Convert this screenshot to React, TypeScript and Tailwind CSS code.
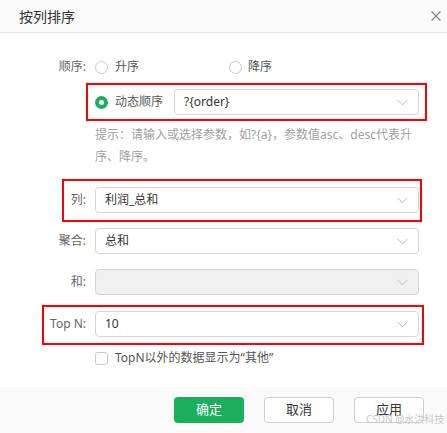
import React from 'react';

const font = { fontFamily: '"Noto Sans", "Noto Sans CJK SC", sans-serif' };

const Chevron = () => (
  <svg width="11" height="7" viewBox="0 0 11 7" fill="none" className="shrink-0">
    <path d="M0.5 0.8L5.5 5.8L10.5 0.8" stroke="#b8b8b8" strokeWidth="1" />
  </svg>
);

function Select({ value, disabled }: { value?: string; disabled?: boolean }) {
  return (
    <div
      className={`flex-1 h-[26px] flex items-center justify-between pl-[9px] pr-[10px] rounded-[4px] border border-[#d6d6d6] ${
        disabled ? 'bg-[#f0f0f0]' : 'bg-white'
      }`}
    >
      <span className="text-[12px] text-[#333]">{value}</span>
      <Chevron />
    </div>
  );
}

function Row({ label, children, className = '' }: { label: string; children: React.ReactNode; className?: string }) {
  return (
    <div className={`flex items-center ${className}`}>
      <div className="w-[86px] shrink-0 text-right text-[12px] text-[#666]">{label}</div>
      <div className="flex-1 flex items-center ml-[9px]">{children}</div>
    </div>
  );
}

const Radio = ({ checked }: { checked?: boolean }) =>
  checked ? (
    <span className="w-[13px] h-[13px] rounded-full border-[4px] border-[#1aaf5d] bg-white shrink-0" />
  ) : (
    <span className="w-[13px] h-[13px] rounded-full border border-[#c8c8c8] bg-white shrink-0" />
  );

export default function App() {
  return (
    <div className="relative w-[447px] h-[433px] bg-white flex flex-col overflow-hidden" style={font}>
      {/* Header */}
      <div className="h-[33px] shrink-0 bg-[#fafafa] border-b border-[#e6e8ec] flex items-center justify-between pl-[19px] pr-[6px]">
        <span className="text-[14px] text-[#333]">按列排序</span>
        <svg width="10" height="10" viewBox="0 0 10 10">
          <path d="M0.5 0.5L9.5 9.5M9.5 0.5L0.5 9.5" stroke="#888" strokeWidth="1.2" />
        </svg>
      </div>

      {/* Body */}
      <div className="flex-1 pr-[28px] pt-[24px]">
        <Row label="顺序:" className="h-[20px]">
          <div className="flex items-center w-[134px]">
            <Radio />
            <span className="ml-[7px] text-[12px] text-[#555]">升序</span>
          </div>
          <div className="flex items-center">
            <Radio />
            <span className="ml-[6px] text-[12px] text-[#555]">降序</span>
          </div>
        </Row>

        <Row label="" className="mt-[12px]">
          <Radio checked />
          <span className="ml-[7px] mr-[11px] text-[12px] text-[#555]">动态顺序</span>
          <Select value="?{order}" />
        </Row>

        <div className="ml-[95px] mt-[9px] text-[12px] leading-[22px] text-[#a0a0a0]">
          <div>提示：请输入或选择参数，如?{'{a}'}，参数值asc、desc代表升</div>
          <div>序、降序。</div>
        </div>

        <Row label="列:" className="mt-[19px]">
          <Select value="利润_总和" />
        </Row>

        <Row label="聚合:" className="mt-[15px]">
          <Select value="总和" />
        </Row>

        <Row label="和:" className="mt-[15px]">
          <Select disabled />
        </Row>

        <Row label="Top N:" className="mt-[16px]">
          <Select value="10" />
        </Row>

        <div className="ml-[95px] mt-[12px] flex items-center">
          <span className="w-[13px] h-[13px] rounded-[3px] border border-[#c8c8c8] bg-white shrink-0" />
          <span className="ml-[7px] text-[12px] text-[#555]">TopN以外的数据显示为“其他”</span>
        </div>
      </div>

      {/* Footer */}
      <div className="h-[46px] shrink-0 bg-[#fafafa] flex items-center justify-end gap-[20px] pr-[23px]">
        <button className="w-[70px] h-[26px] rounded-[4px] bg-[#1aaf5d] text-white text-[13px]">确定</button>
        <button className="w-[70px] h-[26px] rounded-[4px] bg-white border border-[#cfcfcf] text-[#333] text-[13px]">取消</button>
        <button className="w-[70px] h-[26px] rounded-[4px] bg-white border border-[#cfcfcf] text-[#333] text-[13px]">应用</button>
      </div>

      {/* Annotation boxes */}
      <div className="absolute left-[86px] top-[83px] w-[341px] h-[38px] border-2 border-[#ff0000] pointer-events-none" />
      <div className="absolute left-[62px] top-[179px] w-[360px] h-[43px] border-2 border-[#ff0000] pointer-events-none" />
      <div className="absolute left-[42px] top-[305px] w-[382px] h-[40px] border-2 border-[#ff0000] pointer-events-none" />

      {/* Watermark */}
      <div className="absolute left-[366px] top-[414px] text-[10px] text-[#c8c8c8] leading-none whitespace-nowrap">CSDN @水洪科技</div>
    </div>
  );
}
